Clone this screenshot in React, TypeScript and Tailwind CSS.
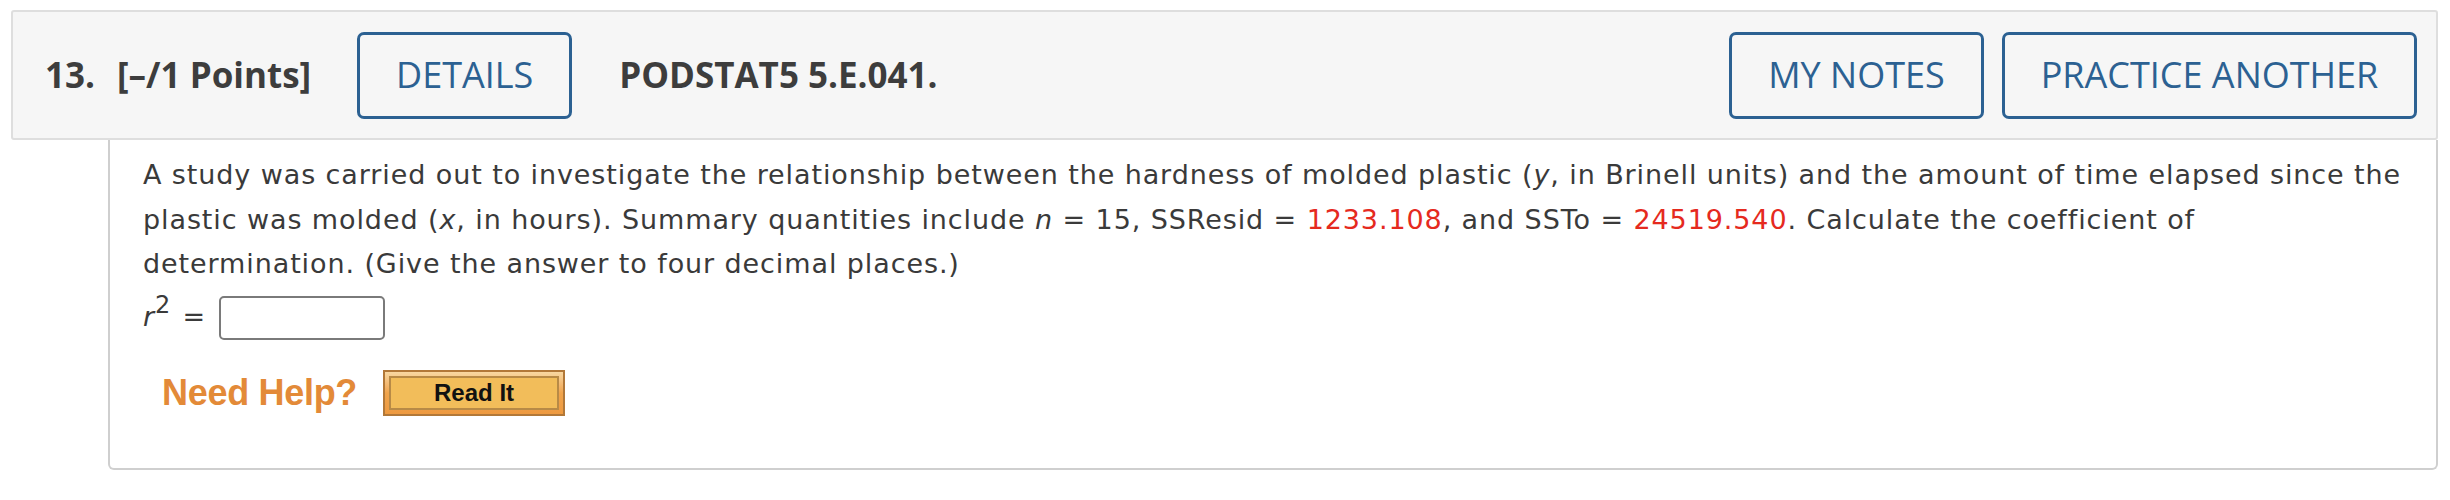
export default function App() {
  return (
    <div className="w-[2450px] h-[500px] bg-white pt-[10px]">
      {/* question header */}
      <div className="mx-[11px] mr-[12px] h-[130px] flex items-center bg-[#f6f6f6] border-2 border-[#dedede] rounded-[3px] pl-[32px] pr-[19px] font-['Open_Sans',sans-serif] text-[#3d3d3d]">
        <span className="text-[35px] font-bold">13.</span>
        <span className="ml-[22px] text-[35px] font-bold">[–/1 Points]</span>
        <button className="ml-[46px] w-[215px] h-[87px] border-[3px] border-[#2c6192] rounded-[7px] text-[36px] text-[#2c6192] bg-transparent">
          DETAILS
        </button>
        <span className="ml-[47px] text-[35px] font-bold">PODSTAT5 5.E.041.</span>
        <div className="ml-auto flex gap-[18px]">
          <button className="w-[255px] h-[87px] border-[3px] border-[#2c6192] rounded-[7px] text-[36px] text-[#2c6192]">
            MY NOTES
          </button>
          <button className="w-[415px] h-[87px] border-[3px] border-[#2c6192] rounded-[7px] text-[36px] text-[#2c6192]">
            PRACTICE ANOTHER
          </button>
        </div>
      </div>

      {/* question body */}
      <div className="ml-[108px] mr-[12px] h-[330px] border-2 border-t-0 border-[#cfcfcf] rounded-b-[6px] pl-[33px] pr-[28px] pt-[13px] font-['DejaVu_Sans',Verdana,sans-serif] text-[#3a3a3a]">
        <p className="text-[27px] leading-[44.5px] tracking-[0.9px]">
          A study was carried out to investigate the relationship between the hardness of molded plastic (<i>y</i>, in Brinell units) and the amount of time elapsed since the plastic was molded (<i>x</i>, in hours). Summary quantities include <i>n</i> = 15, SSResid = <span className="text-[#e52a1e]">1233.108</span>, and SSTo = <span className="text-[#e52a1e]">24519.540</span>. Calculate the coefficient of determination. (Give the answer to four decimal places.)
        </p>
        <div className="mt-[9px] flex items-center h-[44px] text-[27px]">
          <span className="flex items-start">
            <i>r</i>
            <span className="text-[24px] leading-none -mt-[4px] ml-[1px]">2</span>
          </span>
          <span className="ml-[12px]">=</span>
          <div className="ml-[14px] w-[166px] h-[44px] border-2 border-[#7a7a7a] rounded-[5px] bg-white" />
        </div>
        <div className="mt-[26px] flex items-center">
          <span className="ml-[19px] text-[36px] font-bold text-[#e38a38] font-['Liberation_Sans',Arial,sans-serif] tracking-[-0.3px]">
            Need Help?
          </span>
          <div className="ml-[26px] w-[182px] h-[46px] border-2 border-[#b27838] bg-gradient-to-b from-[#f8d7a0] via-[#f0a44c] to-[#ee9a40] p-[4px]">
            <div className="w-full h-full border-2 border-[#b88a46] bg-[#f2bd5a] flex items-center justify-center text-[24px] font-bold text-[#111] font-['Liberation_Sans',Arial,sans-serif]">
              Read It
            </div>
          </div>
        </div>
      </div>
    </div>
  );
}
